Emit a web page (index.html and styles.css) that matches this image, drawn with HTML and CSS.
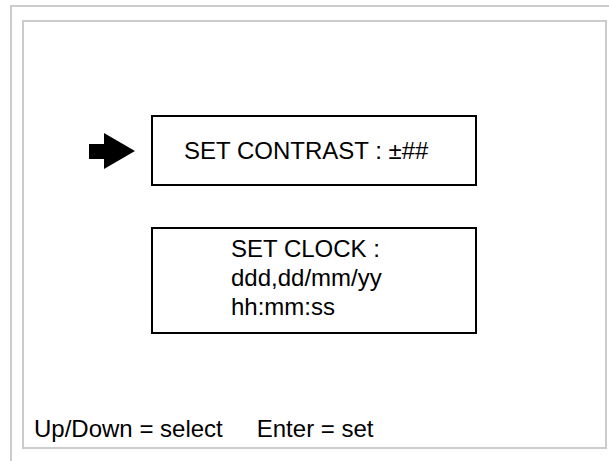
FILE: index.html
```html
<!DOCTYPE html>
<html>
<head>
<meta charset="utf-8">
<link rel="stylesheet" href="styles.css">
</head>
<body>
<div class="page">
  <div class="panel">
    <div class="row first">
      <svg class="arrow" width="46" height="36" viewBox="0 0 46 36"><polygon points="0,11 15,11 15,0 46,18 15,36 15,26 0,26" fill="#000"/></svg>
      <div class="box box-contrast">SET CONTRAST : ±##</div>
    </div>
    <div class="row second">
      <div class="box box-clock">
        <div>SET CLOCK :</div>
        <div>ddd,dd/mm/yy</div>
        <div>hh:mm:ss</div>
      </div>
    </div>
    <div class="help"><span>Up/Down = select</span><span>Enter = set</span></div>
  </div>
</div>
</body>
</html>
```
FILE: styles.css
```css
html, body {
  margin: 0;
  padding: 0;
  background: #fff;
}
body {
  font-family: "Liberation Sans", Arial, sans-serif;
  font-size: 24px;
  line-height: 29px;
  color: #000;
}
.page {
  margin: 5px 0 0 10px;
  border-top: 2px solid #ccc;
  border-left: 2px solid #ccc;
  padding: 13px 0 0 10px;
  height: 456px;
  box-sizing: border-box;
}
.panel {
  width: 585px;
  height: 429px;
  box-sizing: border-box;
  border: 2px solid #ccc;
  display: flex;
  flex-direction: column;
}
.row {
  display: flex;
  align-items: center;
}
.row.first {
  margin-top: 93px;
  padding-left: 65px;
  gap: 16px;
}
.row.second {
  margin-top: 41px;
  padding-left: 127px;
}
.arrow {
  display: block;
  flex: none;
}
.box {
  border: 2px solid #000;
  box-sizing: border-box;
  width: 326px;
}
.box-contrast {
  height: 71px;
  display: flex;
  align-items: center;
  padding-left: 31px;
}
.box-clock {
  height: 107px;
  padding: 5px 0 0 78px;
}
.help {
  margin-top: auto;
  padding: 0 0 4px 10px;
  display: flex;
  gap: 34px;
}
```
